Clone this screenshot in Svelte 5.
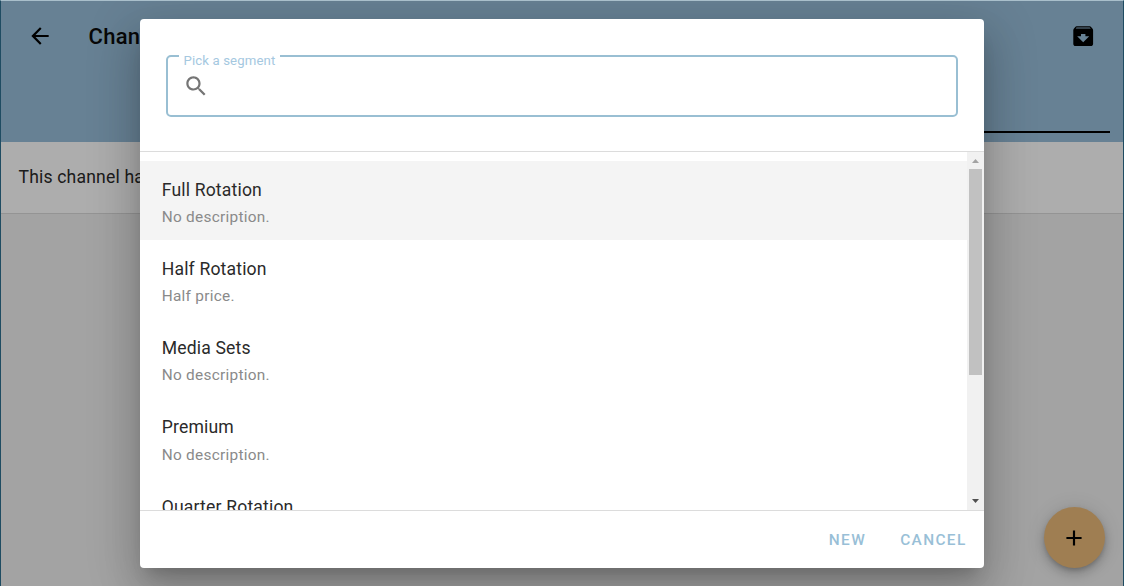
<script>
	/**
	 * @type {{ name: string, description: string }[]}
	 */
	export let segments = [
		{ name: 'Full Rotation', description: 'No description.' },
		{ name: 'Half Rotation', description: 'Half price.' },
		{ name: 'Media Sets', description: 'No description.' },
		{ name: 'Premium', description: 'No description.' },
		{ name: 'Quarter Rotation', description: 'No description.' }
	];
	export let focused = 0;

	let query = '';

	$: visible = segments.filter((s) => s.name.toLowerCase().includes(query.toLowerCase()));
</script>

<div class="screen">
	<header class="app-bar">
		<div class="app-bar-row">
			<button class="icon-button" aria-label="Back">
				<svg viewBox="0 0 24 24" width="26" height="26">
					<path d="M20 11H7.83l5.59-5.59L12 4l-8 8 8 8 1.41-1.41L7.83 13H20v-2z" />
				</svg>
			</button>
			<h1>Channel</h1>
			<button class="icon-button" aria-label="Archive">
				<svg viewBox="0 0 24 24" width="26.4" height="26.4">
					<path
						d="M20.54 5.23l-1.39-1.68C18.88 3.21 18.47 3 18 3H6c-.47 0-.88.21-1.16.55L3.46 5.23C3.17 5.57 3 6.02 3 6.5V19c0 1.1.9 2 2 2h14c1.1 0 2-.9 2-2V6.5c0-.48-.17-.93-.46-1.27zM12 17.5L6.5 12H10v-2h4v2h3.5L12 17.5zM5.12 5l.81-1h12l.94 1H5.12z"
					/>
				</svg>
			</button>
		</div>
		<div class="tab-indicator"></div>
	</header>
	<p class="notice">This channel has</p>

	<button class="fab" aria-label="Add">
		<svg viewBox="0 0 24 24" width="26" height="26">
			<path d="M19 13h-6v6h-2v-6H5v-2h6V5h2v6h6v2z" />
		</svg>
	</button>

	<div class="scrim">
		<div class="dialog" role="dialog" aria-label="Pick a segment">
			<div class="search">
				<fieldset class="field">
					<legend>Pick a segment</legend>
					<svg viewBox="0 0 24 24" width="26.4" height="26.4">
						<path
							d="M15.5 14h-.79l-.28-.27C15.41 12.59 16 11.11 16 9.5 16 5.91 13.09 3 9.5 3S3 5.91 3 9.5 5.91 16 9.5 16c1.61 0 3.09-.59 4.23-1.57l.27.28v.79l5 4.99L20.49 19l-4.99-5zm-6 0C7.01 14 5 11.99 5 9.5S7.01 5 9.5 5 14 7.01 14 9.5 11.99 14 9.5 14z"
						/>
					</svg>
					<input type="text" aria-label="Pick a segment" bind:value={query} />
				</fieldset>
			</div>
			<div class="content">
				<ul>
					{#each visible as segment, i}
						<li class:focused={i === focused}>
							<span class="primary">{segment.name}</span>
							<span class="secondary">{segment.description}</span>
						</li>
					{/each}
				</ul>
				<div class="scrollbar">
					<svg viewBox="0 0 7 4" width="7" height="4" fill="#a3a3a3"><path d="M0 4L3.5 0 7 4z" /></svg>
					<div class="track"><div class="thumb"></div></div>
					<svg viewBox="0 0 7 4" width="7" height="4" fill="#505050"><path d="M0 0h7L3.5 4z" /></svg>
				</div>
			</div>
			<div class="actions">
				<button>New</button>
				<button>Cancel</button>
			</div>
		</div>
	</div>
</div>

<style>
	:global(body) {
		margin: 0;
	}
	.screen {
		position: relative;
		box-sizing: border-box;
		height: 586px;
		overflow: hidden;
		border: 1px solid #1f4c62;
		border-top-color: #a9bfcb;
		border-bottom: 0;
		background: #f0f0f0;
		font-family: Roboto, sans-serif;
	}
	button {
		padding: 0;
		border: 0;
		background: none;
		font-family: inherit;
	}
	svg {
		display: block;
		flex: none;
	}
	.app-bar {
		box-sizing: border-box;
		display: flex;
		flex-direction: column;
		justify-content: space-between;
		height: 141px;
		padding: 0 13px 9px 26px;
		background: #98bfda;
	}
	.app-bar-row {
		display: flex;
		align-items: center;
		height: 70px;
		padding-right: 13.6px;
	}
	h1 {
		flex: 1;
		margin: 0 0 0 35.5px;
		color: #0c0c0c;
		font-size: 22px;
		font-weight: 500;
		letter-spacing: 0.0125em;
	}
	.tab-indicator {
		align-self: flex-end;
		width: 50%;
		height: 2px;
		background: #000;
	}
	.notice {
		box-sizing: border-box;
		height: 72px;
		margin: 0;
		padding: 0 17.5px;
		border-bottom: 1px solid #dadada;
		background: #fff;
		color: #2a2a2a;
		font-size: 17.6px;
		line-height: 70px;
		letter-spacing: 0.009375em;
	}
	.fab {
		position: absolute;
		right: 18.5px;
		bottom: 18px;
		display: flex;
		align-items: center;
		justify-content: center;
		width: 61px;
		height: 61px;
		border-radius: 50%;
		background: #ebba79;
		box-shadow:
			0 3px 5px -1px rgba(0, 0, 0, 0.2),
			0 6px 11px 0 rgba(0, 0, 0, 0.14),
			0 1px 20px 0 rgba(0, 0, 0, 0.12);
	}
	.scrim {
		position: absolute;
		inset: 0;
		display: flex;
		align-items: center;
		justify-content: center;
		background: rgba(0, 0, 0, 0.32);
	}
	.dialog {
		display: flex;
		flex-direction: column;
		width: 844px;
		height: 549px;
		margin-bottom: 1px;
		border-radius: 4px;
		background: #fff;
		box-shadow:
			0 12px 17px -8px rgba(0, 0, 0, 0.2),
			0 26px 42px 3px rgba(0, 0, 0, 0.14),
			0 10px 51px 9px rgba(0, 0, 0, 0.12);
	}
	.search {
		box-sizing: border-box;
		height: 133px;
		padding: 29px 26px 0;
		border-bottom: 1px solid #dcdcdc;
	}
	.field {
		box-sizing: border-box;
		display: flex;
		height: 69px;
		margin: 0;
		padding: 0 15px 0 11px;
		border: 2px solid #99bfd3;
		border-radius: 5px;
	}
	legend {
		height: 16px;
		padding: 0 4.5px;
		color: #a5c8df;
		font-size: 13.2px;
		line-height: 26px;
		letter-spacing: 0.009375em;
	}
	.field svg {
		margin: 9px 0 0 4.4px;
		fill: #757575;
	}
	input {
		flex: 1;
		min-width: 0;
		height: 40px;
		border: 0;
		outline: none;
		background: none;
		font: 17.6px Roboto, sans-serif;
	}
	.content {
		display: flex;
		flex: 1;
		min-height: 0;
	}
	ul {
		flex: 1;
		margin: 0;
		padding: 9px 0 0;
		overflow: hidden;
		list-style: none;
	}
	li {
		box-sizing: border-box;
		display: flex;
		flex-direction: column;
		height: 79.2px;
		padding: 16.25px 21.7px 0;
	}
	li.focused {
		background: #f4f4f4;
	}
	.primary {
		color: #2a2a2a;
		font-size: 17.6px;
		line-height: 27px;
		letter-spacing: 0.009375em;
	}
	.secondary {
		margin-top: 0.2px;
		color: #8a8a8a;
		font-size: 15.4px;
		line-height: 27px;
		letter-spacing: 0.0178571429em;
	}
	.scrollbar {
		box-sizing: border-box;
		display: flex;
		flex-direction: column;
		align-items: center;
		width: 17px;
		padding: 7px 0;
		background: #f1f1f1;
	}
	.track {
		flex: 1;
		padding: 6px 0;
	}
	.thumb {
		width: 13px;
		height: 206px;
		background: #c1c1c1;
	}
	.actions {
		box-sizing: border-box;
		display: flex;
		align-items: center;
		justify-content: flex-end;
		gap: 34px;
		height: 58px;
		padding: 2px 17.4px 0 0;
		border-top: 1px solid #dcdcdc;
	}
	.actions button {
		color: #99bfd7;
		font-size: 15.4px;
		font-weight: 500;
		letter-spacing: 0.0892857143em;
		text-transform: uppercase;
	}
</style>
